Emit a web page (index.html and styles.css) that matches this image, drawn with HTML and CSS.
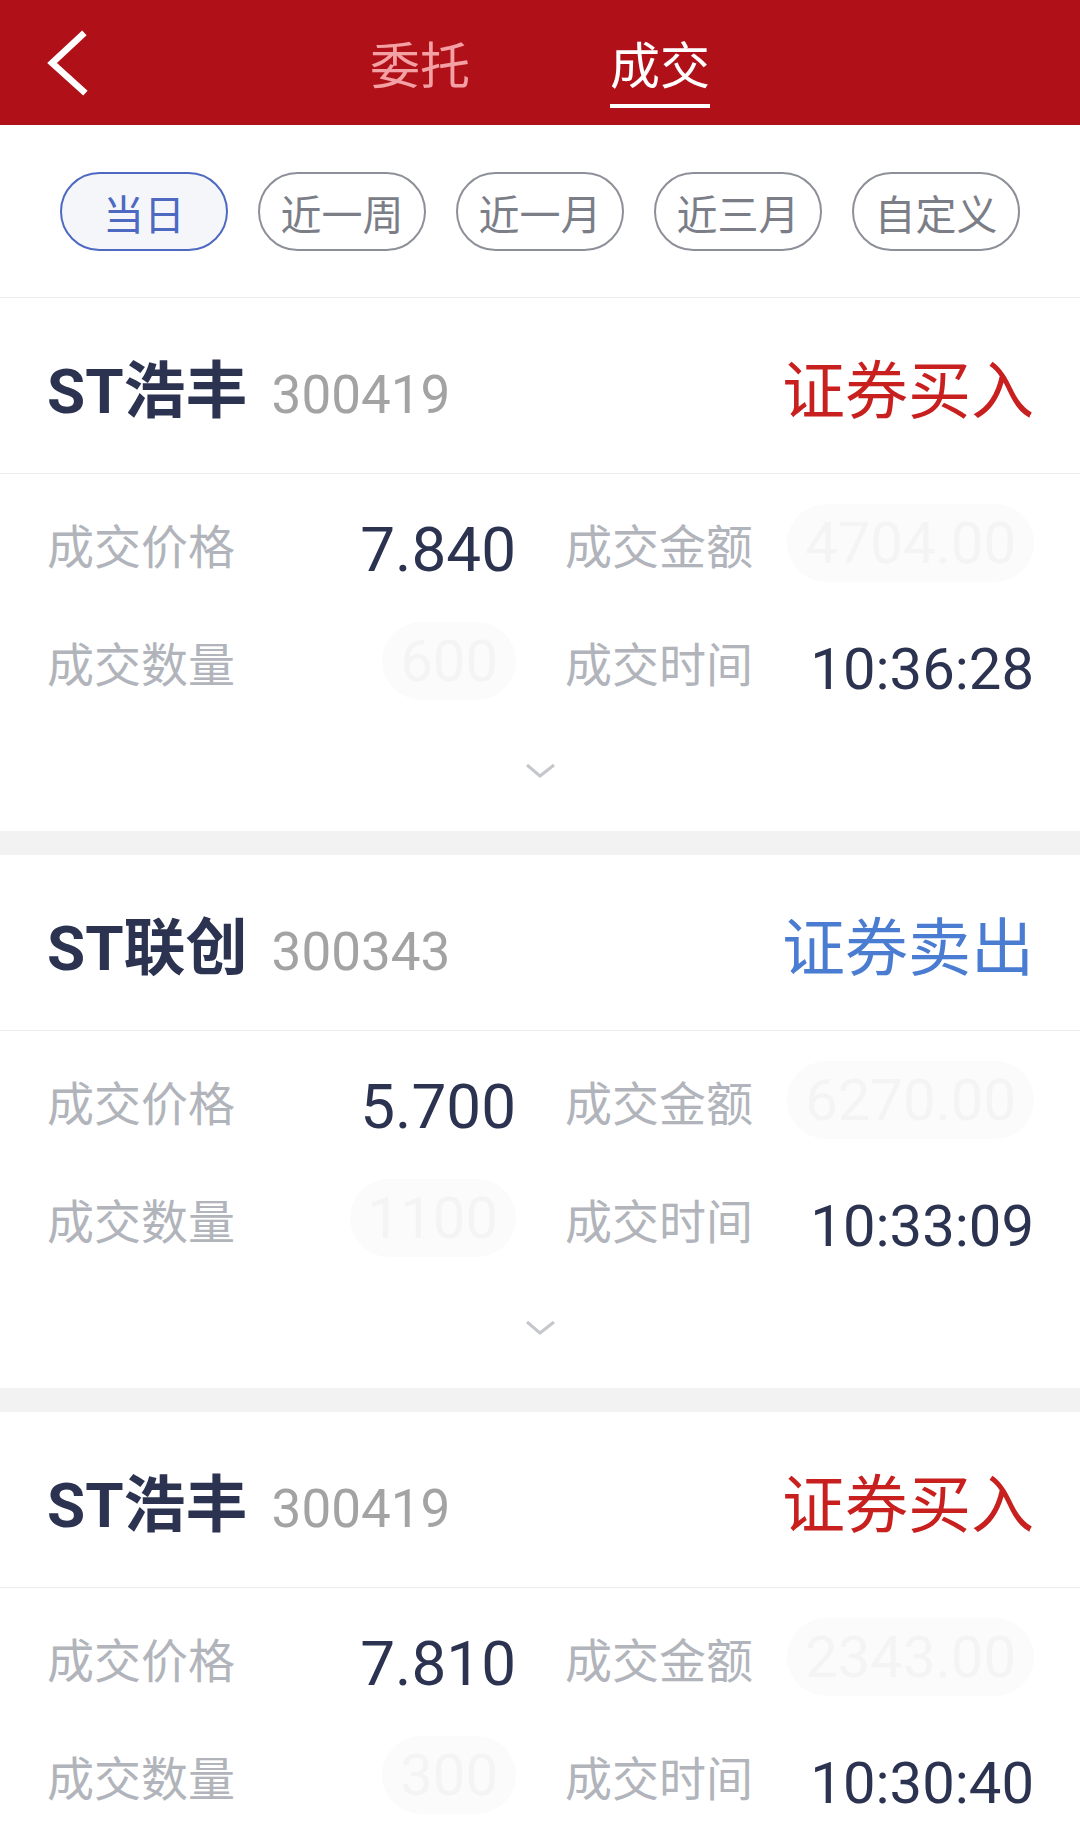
FILE: index.html
```html
<!DOCTYPE html>
<html lang="zh-CN">
<head>
    <meta charset="UTF-8">
    <meta name="viewport" content="width=device-width, initial-scale=1.0">
    <title>成交查询</title>
    <link rel="stylesheet" href="styles.css">
</head>
<body>
    <!-- Top bar -->
    <header class="topbar">
        <a class="back" href="#">
            <svg width="44" height="66" viewBox="0 0 44 66">
                <polyline points="36,5 6,33 37,61" fill="none" stroke="#fff" stroke-width="6.5" stroke-linecap="square"/>
            </svg>
        </a>
        <nav class="tabs">
            <span class="tab">委托</span>
            <span class="tab active">成交</span>
        </nav>
        <div></div>
    </header>

    <!-- Date filters -->
    <div class="filters">
        <span class="chip selected">当日</span>
        <span class="chip">近一周</span>
        <span class="chip">近一月</span>
        <span class="chip">近三月</span>
        <span class="chip">自定义</span>
    </div>

    <main class="list">
        <article class="trade">
            <div class="trade-head">
                <div class="stock"><span class="name">ST浩丰</span><span class="code">300419</span></div>
                <span class="side buy">证券买入</span>
            </div>
            <div class="trade-body">
                <div class="grid">
                    <div class="cell"><span class="label">成交价格</span><span class="value price">7.840</span></div>
                    <div class="cell"><span class="label">成交金额</span><span class="value mask">4704.00</span></div>
                    <div class="cell"><span class="label">成交数量</span><span class="value mask">600</span></div>
                    <div class="cell"><span class="label">成交时间</span><span class="value">10:36:28</span></div>
                </div>
                <div class="more">
                    <svg width="31" height="16" viewBox="0 0 31 16"><polyline points="2,2 15,13 29,2" fill="none" stroke="#c5c7cd" stroke-width="3"/></svg>
                </div>
            </div>
        </article>

        <article class="trade">
            <div class="trade-head">
                <div class="stock"><span class="name">ST联创</span><span class="code">300343</span></div>
                <span class="side sell">证券卖出</span>
            </div>
            <div class="trade-body">
                <div class="grid">
                    <div class="cell"><span class="label">成交价格</span><span class="value price">5.700</span></div>
                    <div class="cell"><span class="label">成交金额</span><span class="value mask">6270.00</span></div>
                    <div class="cell"><span class="label">成交数量</span><span class="value mask">1100</span></div>
                    <div class="cell"><span class="label">成交时间</span><span class="value">10:33:09</span></div>
                </div>
                <div class="more">
                    <svg width="31" height="16" viewBox="0 0 31 16"><polyline points="2,2 15,13 29,2" fill="none" stroke="#c5c7cd" stroke-width="3"/></svg>
                </div>
            </div>
        </article>

        <article class="trade">
            <div class="trade-head">
                <div class="stock"><span class="name">ST浩丰</span><span class="code">300419</span></div>
                <span class="side buy">证券买入</span>
            </div>
            <div class="trade-body">
                <div class="grid">
                    <div class="cell"><span class="label">成交价格</span><span class="value price">7.810</span></div>
                    <div class="cell"><span class="label">成交金额</span><span class="value mask">2343.00</span></div>
                    <div class="cell"><span class="label">成交数量</span><span class="value mask">300</span></div>
                    <div class="cell"><span class="label">成交时间</span><span class="value">10:30:40</span></div>
                </div>
                <div class="more">
                    <svg width="31" height="16" viewBox="0 0 31 16"><polyline points="2,2 15,13 29,2" fill="none" stroke="#c5c7cd" stroke-width="3"/></svg>
                </div>
            </div>
        </article>
    </main>
</body>
</html>
```
FILE: styles.css
```css
body {
    margin: 0;
    background-color: #f2f2f2;
    font-family: "Noto Sans CJK SC", "Noto Sans", sans-serif;
    color: #2c3350;
}

/* top bar */
.topbar {
    height: 125px;
    background-color: #b01018;
    display: grid;
    grid-template-columns: 1fr auto 1fr;
    align-items: start;
}
.back {
    display: block;
    width: 44px;
    height: 66px;
    margin: 30px 0 0 46px;
}
.back svg {
    display: block;
}
.tabs {
    display: flex;
    gap: 140px;
}
.tab {
    font-size: 50px;
    line-height: 1;
    padding: 37px 0 17px;
    border-bottom: 4px solid transparent;
    color: #f3a1a4;
}
.tab.active {
    color: #fff;
    border-bottom-color: #fff;
}

/* filter chips */
.filters {
    background-color: #fff;
    display: flex;
    gap: 30px;
    padding: 47px 60px 46px;
    border-bottom: 1px solid #ececec;
}
.chip {
    box-sizing: border-box;
    width: 168px;
    height: 79px;
    border: 2px solid #8d9098;
    border-radius: 40px;
    display: flex;
    align-items: center;
    justify-content: center;
    font-size: 41px;
    color: #7b7e87;
}
.chip.selected {
    border-color: #4d69c2;
    background-color: #f5f6f9;
    color: #4d69c2;
}

/* trade cards */
.trade {
    background-color: #fff;
    margin-bottom: 24px;
}
.trade-head {
    box-sizing: border-box;
    height: 176px;
    padding: 0 46px 0 47px;
    border-bottom: 1px solid #ececec;
    display: flex;
    align-items: center;
    justify-content: space-between;
}
.stock {
    display: flex;
    align-items: baseline;
}
.name {
    font-family: Roboto, "Noto Sans CJK SC", sans-serif;
    font-size: 62px;
    font-weight: bold;
    color: #2c3350;
}
.code {
    font-family: Roboto, sans-serif;
    font-size: 53px;
    color: #a3a3a3;
    margin-left: 24px;
}
.side {
    font-size: 63px;
}
.side.buy {
    color: #c8201f;
}
.side.sell {
    color: #4a7cd2;
}

.trade-body {
    padding: 10px 46px 52px 47px;
}
.grid {
    display: grid;
    grid-template-columns: 1fr 1fr;
    grid-auto-rows: 118px;
    column-gap: 49px;
}
.cell {
    display: flex;
    align-items: center;
    justify-content: space-between;
}
.label {
    font-size: 47px;
    line-height: 1;
    color: #b1b4bb;
}
.value {
    font-family: Roboto, sans-serif;
    font-size: 58px;
    line-height: 1;
    margin-top: 16px;
    color: #2c3350;
}
.value.price {
    font-size: 62px;
    margin-top: 14px;
}
.value.mask {
    color: #f4f4f4;
    background-color: #fbfbfb;
    border-radius: 50px;
    padding: 10px 18px;
    margin-top: 0;
}
.more {
    display: flex;
    justify-content: center;
    margin-top: 43px;
}
.more svg {
    display: block;
}
```
